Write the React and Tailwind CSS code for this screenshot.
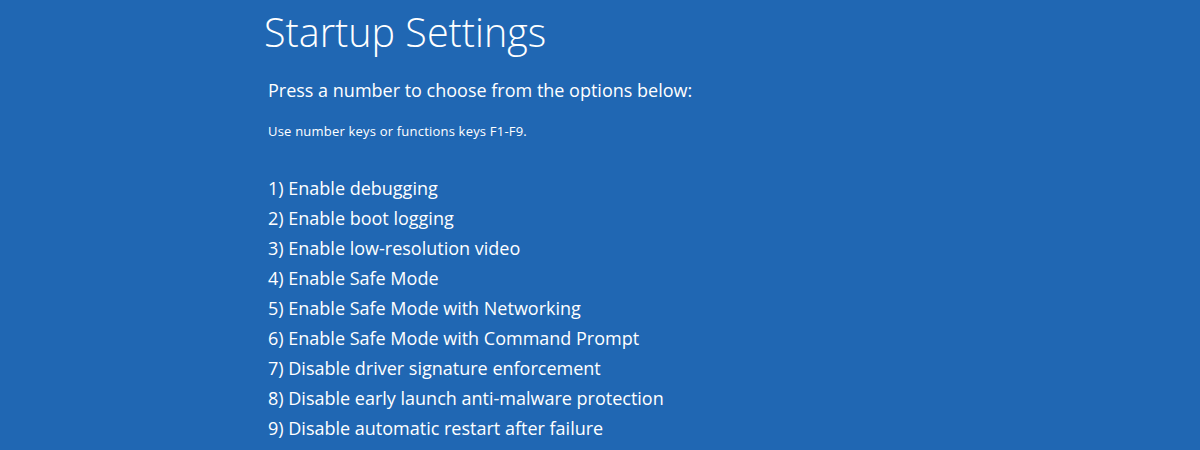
import React from "react";

const items = [
  "1) Enable debugging",
  "2) Enable boot logging",
  "3) Enable low-resolution video",
  "4) Enable Safe Mode",
  "5) Enable Safe Mode with Networking",
  "6) Enable Safe Mode with Command Prompt",
  "7) Disable driver signature enforcement",
  "8) Disable early launch anti-malware protection",
  "9) Disable automatic restart after failure",
];

export default function App() {
  return (
    <div
      className="w-[1200px] h-[450px] overflow-hidden bg-[#2067b3] text-white"
      style={{ fontFamily: '"Open Sans", "Noto Sans", sans-serif' }}
    >
      <div className="pl-[264px] pt-[8px] flex flex-col">
        <h1 className="text-[39.5px] leading-[48px] font-light">Startup Settings</h1>
        <p className="mt-[21px] text-[18px] leading-[26px] pl-[4px]">
          Press a number to choose from the options below:
        </p>
        <p className="mt-[19px] text-[13px] leading-[18px] pl-[4px] tracking-[0.2px]">
          Use number keys or functions keys F1-F9.
        </p>
        <ul className="mt-[33px] pl-[4px] flex flex-col">
          {items.map((t) => (
            <li key={t} className="text-[18px] leading-[30px]">
              {t}
            </li>
          ))}
        </ul>
      </div>
    </div>
  );
}
